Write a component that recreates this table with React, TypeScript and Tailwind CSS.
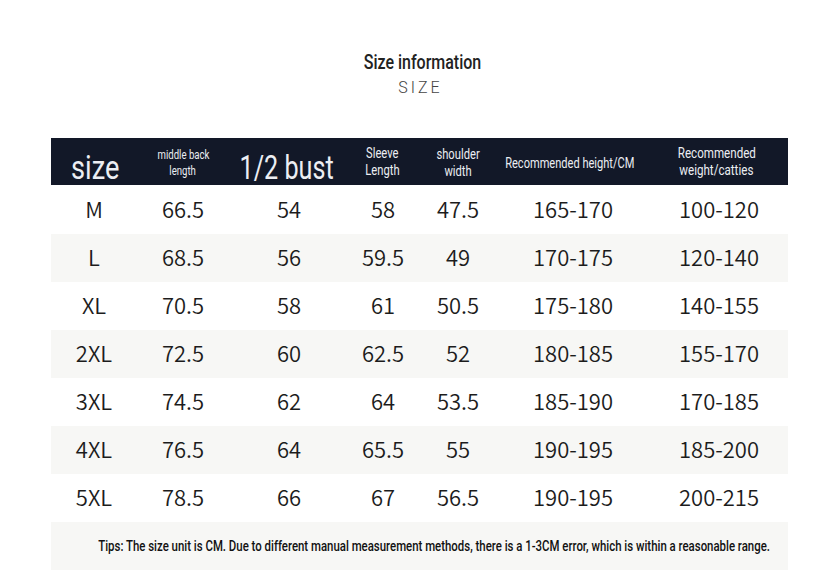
import React from "react";

const rows = [
  ["M", "66.5", "54", "58", "47.5", "165-170", "100-120"],
  ["L", "68.5", "56", "59.5", "49", "170-175", "120-140"],
  ["XL", "70.5", "58", "61", "50.5", "175-180", "140-155"],
  ["2XL", "72.5", "60", "62.5", "52", "180-185", "155-170"],
  ["3XL", "74.5", "62", "64", "53.5", "185-190", "170-185"],
  ["4XL", "76.5", "64", "65.5", "55", "190-195", "185-200"],
  ["5XL", "78.5", "66", "67", "56.5", "190-195", "200-215"],
];

function C({ children, className = "", s = 0.8 }: { children: React.ReactNode; className?: string; s?: number }) {
  return (
    <span
      className={`inline-block whitespace-nowrap origin-center ${className}`}
      style={{ fontFamily: '"Roboto", sans-serif', transform: `scaleX(${s})` }}
    >
      {children}
    </span>
  );
}

const grid = "grid grid-cols-[86px_92px_124px_60px_90px_138px_147px]";
const hc = "flex flex-col items-center justify-center";

export default function App() {
  return (
    <div className="w-[839px] h-[588px] bg-white overflow-hidden">
      <div className="flex flex-col items-center pt-[50px]">
        <div className="text-[20px] leading-[24px] text-[#222] pl-[5px] font-medium">
          <C>Size information</C>
        </div>
        <div className="text-[16px] leading-[18px] text-[#444] tracking-[3px] mt-[5px] pl-[2px]" style={{ fontFamily: '"Roboto", sans-serif', fontWeight: 300 }}>SIZE</div>
      </div>
      <div className="ml-[51px] w-[737px] mt-[41px]">
        <div className={`${grid} h-[47px] bg-[#121828] text-[#eceef3]`}>
          <div className="flex items-end justify-center text-[34px] leading-none pb-[1px] pl-[2px]"><C>size</C></div>
          <div className={`${hc} text-[12px] leading-[16px] pt-[2px]`}><C>middle back</C><C>length</C></div>
          <div className="flex items-end justify-center text-[34px] leading-none pb-[1px] pr-[8px]"><C s={0.74}>1/2 bust</C></div>
          <div className={`${hc} text-[14px] leading-[17px] pr-[2px]`}><C>Sleeve</C><C>Length</C></div>
          <div className={`${hc} text-[14px] leading-[17px] pt-[3px]`}><C>shoulder</C><C>width</C></div>
          <div className={`${hc} text-[14px] leading-[17px] pt-[3px] pr-[4px]`}><C s={0.79}>Recommended height/CM</C></div>
          <div className={`${hc} text-[14.5px] leading-[17px] pt-[1px] pl-[4px]`}><C>Recommended</C><C>weight/catties</C></div>
        </div>
        <div className="mt-[1px]">
          {rows.map((r, i) => (
            <div key={i} className={`${grid} h-[48px] items-center text-center text-[22px] text-[#1c1c1c] pb-[3px] ${i % 2 === 1 ? "bg-[#f7f7f5]" : "bg-white"}`} style={{ fontFamily: '"Noto Sans CJK SC", "Noto Sans", sans-serif', fontWeight: 350 }}>
              {r.map((c, j) => (
                <div key={j} className={j === 5 ? "pl-[2px]" : j === 6 ? "pl-[9px]" : j === 2 ? "pr-[4px]" : ""}>{c}</div>
              ))}
            </div>
          ))}
        </div>
        <div className="h-[48px] bg-[#f7f7f5] flex items-center justify-center text-[14px] text-[#111] pl-[30px] font-medium">
          <C s={0.815}>Tips: The size unit is CM. Due to different manual measurement methods, there is a 1-3CM error, which is within a reasonable range.</C>
        </div>
      </div>
    </div>
  );
}
